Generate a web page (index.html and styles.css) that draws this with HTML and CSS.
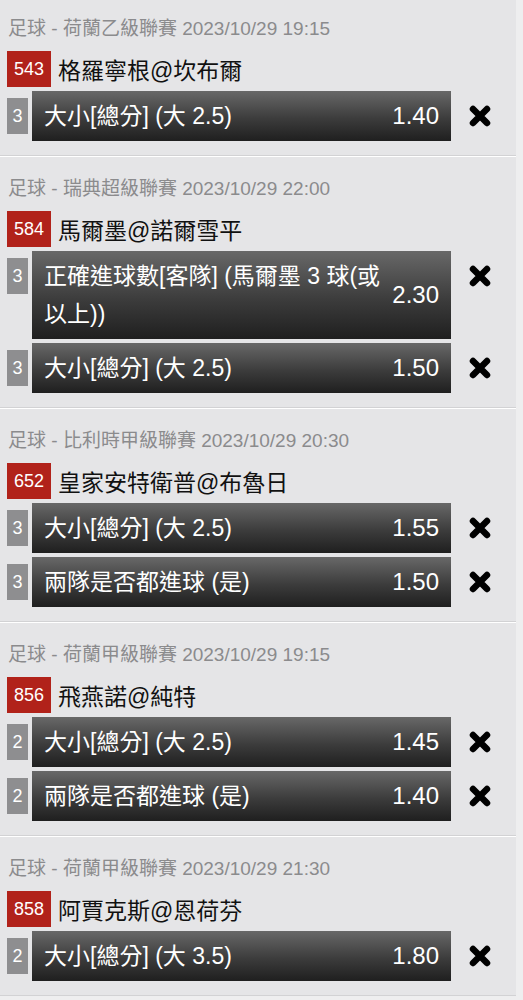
FILE: index.html
```html
<!DOCTYPE html>
<html lang="zh-Hant">
<head>
    <meta charset="UTF-8">
    <title>投注單</title>
    <link rel="stylesheet" href="styles.css">
</head>
<body>

    <div class="slip">

        <div class="match first">
            <div class="league">足球 - 荷蘭乙級聯賽 2023/10/29 19:15</div>
            <div class="teams"><span class="code">543</span>格羅寧根@坎布爾</div>
            <div class="bet">
                <span class="num">3</span>
                <div class="bar"><span class="pick">大小[總分] (大 2.5)</span><span class="odds">1.40</span></div>
                <span class="remove"><svg width="22" height="22" viewBox="0 0 22 22"><path d="M4 4L18 18M18 4L4 18" stroke="#000" stroke-width="6.5" stroke-linecap="round"/></svg></span>
            </div>
        </div>

        <div class="match">
            <div class="league">足球 - 瑞典超級聯賽 2023/10/29 22:00</div>
            <div class="teams"><span class="code">584</span>馬爾墨@諾爾雪平</div>
            <div class="bet">
                <span class="num">3</span>
                <div class="bar"><span class="pick">正確進球數[客隊] (馬爾墨 3 球(或以上))</span><span class="odds">2.30</span></div>
                <span class="remove"><svg width="22" height="22" viewBox="0 0 22 22"><path d="M4 4L18 18M18 4L4 18" stroke="#000" stroke-width="6.5" stroke-linecap="round"/></svg></span>
            </div>
            <div class="bet">
                <span class="num">3</span>
                <div class="bar"><span class="pick">大小[總分] (大 2.5)</span><span class="odds">1.50</span></div>
                <span class="remove"><svg width="22" height="22" viewBox="0 0 22 22"><path d="M4 4L18 18M18 4L4 18" stroke="#000" stroke-width="6.5" stroke-linecap="round"/></svg></span>
            </div>
        </div>

        <div class="match">
            <div class="league">足球 - 比利時甲級聯賽 2023/10/29 20:30</div>
            <div class="teams"><span class="code">652</span>皇家安特衛普@布魯日</div>
            <div class="bet">
                <span class="num">3</span>
                <div class="bar"><span class="pick">大小[總分] (大 2.5)</span><span class="odds">1.55</span></div>
                <span class="remove"><svg width="22" height="22" viewBox="0 0 22 22"><path d="M4 4L18 18M18 4L4 18" stroke="#000" stroke-width="6.5" stroke-linecap="round"/></svg></span>
            </div>
            <div class="bet">
                <span class="num">3</span>
                <div class="bar"><span class="pick">兩隊是否都進球 (是)</span><span class="odds">1.50</span></div>
                <span class="remove"><svg width="22" height="22" viewBox="0 0 22 22"><path d="M4 4L18 18M18 4L4 18" stroke="#000" stroke-width="6.5" stroke-linecap="round"/></svg></span>
            </div>
        </div>

        <div class="match">
            <div class="league">足球 - 荷蘭甲級聯賽 2023/10/29 19:15</div>
            <div class="teams"><span class="code">856</span>飛燕諾@純特</div>
            <div class="bet">
                <span class="num">2</span>
                <div class="bar"><span class="pick">大小[總分] (大 2.5)</span><span class="odds">1.45</span></div>
                <span class="remove"><svg width="22" height="22" viewBox="0 0 22 22"><path d="M4 4L18 18M18 4L4 18" stroke="#000" stroke-width="6.5" stroke-linecap="round"/></svg></span>
            </div>
            <div class="bet">
                <span class="num">2</span>
                <div class="bar"><span class="pick">兩隊是否都進球 (是)</span><span class="odds">1.40</span></div>
                <span class="remove"><svg width="22" height="22" viewBox="0 0 22 22"><path d="M4 4L18 18M18 4L4 18" stroke="#000" stroke-width="6.5" stroke-linecap="round"/></svg></span>
            </div>
        </div>

        <div class="match">
            <div class="league">足球 - 荷蘭甲級聯賽 2023/10/29 21:30</div>
            <div class="teams"><span class="code">858</span>阿賈克斯@恩荷芬</div>
            <div class="bet">
                <span class="num">2</span>
                <div class="bar"><span class="pick">大小[總分] (大 3.5)</span><span class="odds">1.80</span></div>
                <span class="remove"><svg width="22" height="22" viewBox="0 0 22 22"><path d="M4 4L18 18M18 4L4 18" stroke="#000" stroke-width="6.5" stroke-linecap="round"/></svg></span>
            </div>
        </div>

    </div>

</body>
</html>
```

FILE: styles.css
```css
body {
    font-family: "Liberation Sans", "Noto Sans CJK TC", sans-serif;
    background-color: #eeeeef;
    margin: 0;
}

.slip {
    width: 516px;
    background-color: #e5e5e7;
}

.match {
    padding: 20px 7px 14px 7px;
    border-top: 1px solid #ffffff;
    border-bottom: 1px solid #d2d2d4;
}

.match.first {
    padding-top: 17px;
    border-top: none;
}

.league {
    font-size: 19px;
    line-height: 24px;
    color: #8b8b8d;
    margin-bottom: 10px;
    padding-left: 1px;
}

.teams {
    display: flex;
    align-items: center;
    height: 36px;
    font-size: 23px;
    color: #111;
}

.code {
    width: 44px;
    height: 36px;
    line-height: 36px;
    text-align: center;
    background-color: #b1221a;
    color: #fff;
    font-size: 18px;
    margin-right: 7px;
}

.bet {
    display: flex;
    align-items: flex-start;
    margin-top: 4px;
}

.num {
    width: 21px;
    height: 36px;
    line-height: 36px;
    margin-top: 7px;
    text-align: center;
    background-color: #8e8e90;
    color: #fff;
    font-size: 18px;
}

.bar {
    flex: 1;
    display: flex;
    align-items: center;
    margin-left: 4px;
    padding: 6px 12px 6px 12px;
    min-height: 38px;
    background: linear-gradient(#686868, #3c3c3c 55%, #1f1f1f);
    color: #fff;
}

.pick {
    flex: 1;
    font-size: 23px;
    line-height: 38px;
}

.odds {
    font-size: 24px;
    padding-left: 8px;
}

.remove {
    width: 58px;
    height: 50px;
    display: flex;
    align-items: center;
    justify-content: center;
}
```
